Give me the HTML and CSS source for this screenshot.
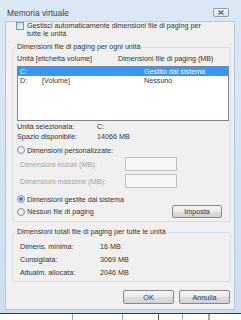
FILE: index.html
```html
<!DOCTYPE html>
<html lang="it">
<head>
  <meta charset="UTF-8" />
  <title>Memoria virtuale</title>
  <link rel="stylesheet" href="styles.css">
</head>
<body>

  <div class="window">
    <div class="titlebar">
      <span class="title">Memoria virtuale</span>
      <span class="close-btn">
        <svg width="8" height="5" viewBox="0 0 8 5"><path d="M1.5 0.5 L6.5 4.5 M6.5 0.5 L1.5 4.5" stroke="#4d5a6a" stroke-width="1.1" fill="none"/></svg>
      </span>
    </div>

    <div class="client">
      <div class="check-row">
        <span class="checkbox"></span>
        <span>Gestisci automaticamente dimensioni file di paging per<br>tutte le unità</span>
      </div>

      <fieldset class="group group-drives">
        <legend>Dimensioni file di paging per ogni unità</legend>
        <div class="list-head">
          <span>Unità [etichetta volume]</span>
          <span>Dimensioni file di paging (MB)</span>
        </div>
        <div class="listbox">
          <div class="list-row selected"><span>C:</span><span></span><span>Gestito dal sistema</span></div>
          <div class="list-row"><span>D:</span><span>[Volume]</span><span>Nessuno</span></div>
        </div>
        <div class="info-row first"><span>Unità selezionata:</span><span>C:</span></div>
        <div class="info-row"><span>Spazio disponibile:</span><span>14066 MB</span></div>

        <div class="radio-row custom"><span class="radio"></span>Dimensioni personalizzate:</div>
        <div class="size-row first"><span>Dimensioni iniziali (MB):</span><span class="textbox"></span></div>
        <div class="size-row"><span>Dimensioni massime (MB):</span><span class="textbox"></span></div>
        <div class="radio-row system"><span class="radio checked"></span>Dimensioni gestite dal sistema</div>
        <div class="radio-row none"><span class="radio"></span>Nessun file di paging<button class="btn btn-set">Imposta</button></div>
      </fieldset>

      <fieldset class="group group-total">
        <legend>Dimensioni totali file di paging per tutte le unità</legend>
        <div class="total-row"><span>Dimens. minima:</span><span>16 MB</span></div>
        <div class="total-row"><span>Consigliata:</span><span>3069 MB</span></div>
        <div class="total-row"><span>Attualm. allocata:</span><span>2046 MB</span></div>
      </fieldset>

      <div class="actions">
        <button class="btn">OK</button>
        <button class="btn">Annulla</button>
      </div>
    </div>
  </div>

  <div class="strip">
    <span class="cell" style="width:73px"></span>
    <span class="cell" style="width:50px"></span>
    <span class="cell dark" style="width:36px"></span>
    <span class="cell" style="width:24px"></span>
    <span class="cell" style="width:26px"></span>
    <span class="cell"></span>
  </div>

</body>
</html>
```

FILE: styles.css
```css
* {
  box-sizing: border-box;
}

body {
  margin: 0;
  width: 241px;
  height: 320px;
  overflow: hidden;
  background: #fff;
  font-family: "Liberation Sans", Arial, sans-serif;
  font-size: 7.2px;
  color: #333;
}

.window {
  height: 313px;
  display: flex;
  flex-direction: column;
  background: linear-gradient(#dde8f5, #cfdeef);
}

.titlebar {
  height: 21px;
  flex: none;
  display: flex;
  justify-content: space-between;
  align-items: flex-start;
  padding: 0 12px 0 7px;
}

.title {
  margin-top: 9px;
  font-size: 8.4px;
  line-height: 8px;
  color: #3d4650;
}

.close-btn {
  margin-top: 8px;
  width: 16px;
  height: 9px;
  border: 1px solid #8e9cad;
  border-radius: 2px;
  background: linear-gradient(#f6f8fb, #d9e2ec);
  display: flex;
  align-items: center;
  justify-content: center;
}

.client {
  flex: 1;
  margin: 0 6px 3px 5px;
  border: 1px solid #b9c8d8;
  background: #f0f0f0;
  display: flex;
  flex-direction: column;
}

.check-row {
  display: flex;
  gap: 3px;
  padding-left: 10px;
  line-height: 8px;
}

.checkbox {
  flex: none;
  width: 8px;
  height: 8px;
  border: 1px solid #7d93ad;
  background: linear-gradient(135deg, #c9dcf0, #f0f5fb);
}

.group {
  margin: 5px 3px 0 6px;
  border: 1px solid #d5dfe5;
  border-radius: 3px;
  padding: 4px 1px 3px 4px;
  min-width: 0;
}

.group legend {
  padding: 0 1px;
  margin-left: -1px;
  line-height: 8px;
}

.list-head {
  display: grid;
  grid-template-columns: 101px 1fr;
  line-height: 8px;
}

.listbox {
  margin-top: 3px;
  height: 55px;
  border: 1px solid #82878f;
  background: #fff;
}

.list-row {
  display: grid;
  grid-template-columns: 22px 102px 1fr;
  padding-left: 2px;
  height: 9px;
  line-height: 9px;
}

.list-row.selected {
  background: #3399ff;
  color: #fff;
}

.info-row {
  display: grid;
  grid-template-columns: 80px 1fr;
  line-height: 10px;
}

.info-row.first {
  margin-top: 1px;
}

.radio-row {
  display: flex;
  align-items: center;
  gap: 2px;
  height: 10px;
}

.radio-row.custom {
  margin-top: 3px;
}

.radio-row.system {
  margin-top: 6px;
}

.radio-row.none {
  margin-top: 1px;
  height: 13px;
}

.radio {
  flex: none;
  width: 8px;
  height: 8px;
  border: 1px solid #8e8f8f;
  border-radius: 50%;
  background: radial-gradient(circle at 50% 50%, #ffffff, #dcdcdc);
}

.radio.checked {
  background: radial-gradient(circle at 50% 50%, #1f5fb5 0, #4c8be0 1.5px, #e6edf5 2.5px, #ffffff 4px);
}

.size-row {
  display: grid;
  grid-template-columns: 105px 52px;
  align-items: center;
  padding-left: 3px;
  height: 14px;
  margin-top: 3px;
  color: #a3a3a3;
}

.size-row.first {
  margin-top: 2px;
}

.textbox {
  height: 14px;
  border: 1px solid #c2c2c2;
  background: #f5f5f5;
}

.btn {
  height: 14px;
  width: 51px;
  padding: 0;
  border: 1px solid #8a8a8a;
  border-radius: 2px;
  background: linear-gradient(#f3f3f3 0%, #ebebeb 50%, #dedede 51%, #d2d2d2 100%);
  font-family: inherit;
  font-size: 7.2px;
  color: #333;
}

.btn-set {
  margin-left: auto;
  margin-right: 7px;
  width: 50px;
  height: 13px;
}

.group-total {
  margin-top: 6px;
  padding: 4px 1px 2px 4px;
}

.total-row {
  display: grid;
  grid-template-columns: 80px 1fr;
  padding-left: 3px;
  line-height: 13px;
}

.actions {
  display: flex;
  justify-content: flex-end;
  gap: 5px;
  margin-top: 8px;
  padding-right: 4px;
}

.strip {
  height: 7px;
  display: flex;
  border-top: 1px solid #3a3a3a;
  background: #fff;
}

.cell {
  height: 100%;
  border-right: 1px solid #a8a8a8;
}

.cell.dark {
  border-right-color: #555;
}
```
